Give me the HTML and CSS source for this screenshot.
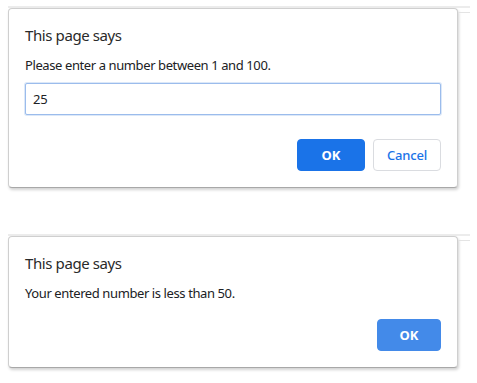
FILE: index.html
```html
<!DOCTYPE html>
<html lang="en">
<head>
  <meta charset="UTF-8">
  <title>This page says</title>
  <link rel="stylesheet" href="styles.css">
</head>
<body>
  <!-- prompt dialog -->
  <div class="frame">
    <div class="dialog">
      <div class="dialog-title">This page says</div>
      <div class="dialog-message">Please enter a number between 1 and 100.</div>
      <input class="dialog-input" type="text" value="25">
      <div class="dialog-buttons prompt-buttons">
        <button class="btn btn-ok">OK</button>
        <button class="btn btn-cancel">Cancel</button>
      </div>
    </div>
  </div>

  <!-- alert dialog -->
  <div class="frame frame-second">
    <div class="dialog">
      <div class="dialog-title">This page says</div>
      <div class="dialog-message">Your entered number is less than 50.</div>
      <div class="dialog-buttons alert-buttons">
        <button class="btn btn-ok btn-ok-idle">OK</button>
      </div>
    </div>
  </div>
</body>
</html>
```

FILE: styles.css
```css
* {
  margin: 0;
  padding: 0;
  box-sizing: border-box;
}

body {
  font-family: "Noto Sans", "Open Sans", sans-serif;
  background: #ffffff;
  color: #202124;
  width: 477px;
  height: 383px;
  overflow: hidden;
  padding-top: 6px;
}

.frame {
  position: relative;
  margin-left: 8px;
  width: 462px;
  border-top: 2px solid #ececec;
}

/* faint page edge behind the dialog */
.frame::after {
  content: "";
  position: absolute;
  top: 4px;
  right: 0;
  width: 12px;
  border-top: 1px solid #e4e4e4;
}

.frame-second {
  margin-top: 46px;
}

.dialog {
  width: 450px;
  background: #ffffff;
  border: 1px solid #cfcfcf;
  border-bottom-color: #a8a8a8;
  border-radius: 4px;
  box-shadow: 1px 2px 3px rgba(0, 0, 0, 0.18);
  padding: 16px;
}

.dialog-title {
  font-size: 15px;
  line-height: 20px;
  letter-spacing: -0.4px;
  color: #2a2a2a;
  margin-bottom: 11px;
}

.dialog-message {
  font-size: 13px;
  line-height: 18px;
  letter-spacing: -0.4px;
}

.dialog-input {
  display: block;
  width: 416px;
  height: 32px;
  margin-top: 9px;
  border: 1px solid #9bbcec;
  border-radius: 2px;
  padding: 0 7px;
  font-family: inherit;
  font-size: 13px;
  letter-spacing: -0.3px;
  color: #202124;
  outline: none;
  box-shadow: 0 0 0 1px rgba(155, 188, 236, 0.35);
}

.dialog-buttons {
  display: flex;
  justify-content: flex-end;
  gap: 8px;
}

.prompt-buttons {
  margin-top: 24px;
}

.alert-buttons {
  margin-top: 17px;
}

.btn {
  height: 32px;
  width: 68px;
  border-radius: 4px;
  font-family: inherit;
  font-size: 13px;
  cursor: pointer;
}

.btn-ok {
  background: #1a73e8;
  border: 1px solid #1a73e8;
  color: #ffffff;
  font-weight: 700;
}

.btn-ok-idle {
  width: 64px;
  background: #438ae9;
  border-color: #438ae9;
}

.btn-cancel {
  background: #ffffff;
  border: 1px solid #dadce0;
  color: #1a73e8;
  font-weight: 500;
  letter-spacing: -0.2px;
}
```
